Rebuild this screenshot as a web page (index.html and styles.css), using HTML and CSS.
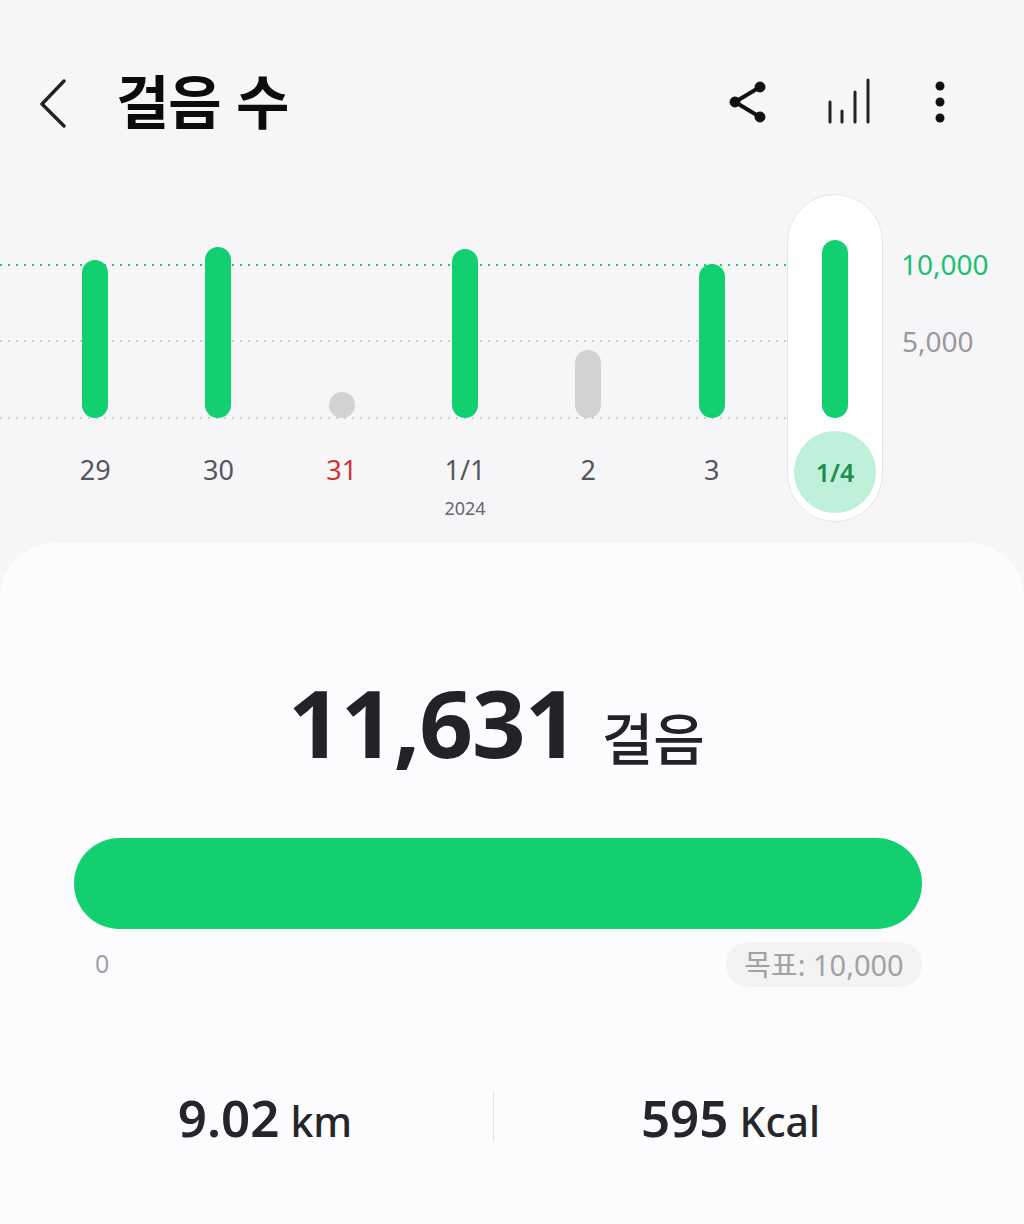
FILE: index.html
```html
<!DOCTYPE html>
<html lang="ko">
<head>
<meta charset="utf-8">
<title>걸음 수</title>
<link rel="stylesheet" href="styles.css">
</head>
<body>
<div class="app">
  <header class="topbar">
    <svg class="icon-back" width="30" height="50" viewBox="0 0 30 50"><path d="M26 3 4 26l22 22" fill="none" stroke="#222" stroke-width="3.4" stroke-linecap="round" stroke-linejoin="round"/></svg>
    <h1 class="title">걸음 수</h1>
    <div class="actions">
      <svg class="icon-share" width="40" height="44" viewBox="0 0 40 44"><g fill="#111" stroke="#111"><path d="M32 7 7 22l25 15" fill="none" stroke-width="4"/><circle cx="32" cy="7" r="5"/><circle cx="7" cy="22" r="5"/><circle cx="32" cy="37" r="5"/></g></svg>
      <svg class="icon-bars" width="44" height="46" viewBox="0 0 44 46"><g stroke="#222" stroke-width="3" stroke-linecap="round"><path d="M3 24v20"/><path d="M15 33v11"/><path d="M28 14v30"/><path d="M41 2v42"/></g></svg>
      <svg class="icon-more" width="10" height="42" viewBox="0 0 10 42"><g fill="#111"><circle cx="5" cy="5" r="4.5"/><circle cx="5" cy="21" r="4.5"/><circle cx="5" cy="37" r="4.5"/></g></svg>
    </div>
  </header>

  <section class="chart">
    <div class="gridline gridline-goal"></div>
    <div class="gridline gridline-mid"></div>
    <div class="gridline gridline-base"></div>
    <div class="columns">
      <div class="day"><div class="plot"><div class="bar" style="height:158px"></div></div><div class="day-label">29</div></div>
      <div class="day"><div class="plot"><div class="bar" style="height:171px"></div></div><div class="day-label">30</div></div>
      <div class="day"><div class="plot"><div class="bar bar-under" style="height:26px"></div></div><div class="day-label day-label-holiday">31</div></div>
      <div class="day"><div class="plot"><div class="bar" style="height:169px"></div></div><div class="day-label">1/1</div><div class="year-label">2024</div></div>
      <div class="day"><div class="plot"><div class="bar bar-under" style="height:68px"></div></div><div class="day-label">2</div></div>
      <div class="day"><div class="plot"><div class="bar" style="height:154px"></div></div><div class="day-label">3</div></div>
      <div class="day day-current">
        <div class="current-pill">
          <div class="plot"><div class="bar" style="height:178px"></div></div>
          <div class="current-date">1/4</div>
        </div>
      </div>
    </div>
    <div class="scale scale-goal">10,000</div>
    <div class="scale scale-mid">5,000</div>
  </section>

  <main class="sheet">
    <div class="total"><span class="total-value">11,631</span><span class="total-unit">걸음</span></div>
    <div class="progress"></div>
    <div class="progress-legend">
      <span class="legend-zero">0</span>
      <span class="legend-goal">목표: 10,000</span>
    </div>
    <div class="stats">
      <div class="stat"><span class="stat-value">9.02</span><span class="stat-unit">km</span></div>
      <div class="stat stat-divided"><span class="stat-value">595</span><span class="stat-unit">Kcal</span></div>
    </div>
  </main>
</div>
</body>
</html>
```
FILE: styles.css
```css
* { box-sizing: border-box; }

html, body { margin: 0; padding: 0; }

body {
  background: #f6f6f8;
  font-family: "Noto Sans", "Noto Sans CJK KR", sans-serif;
  color: #222;
}

.app {
  width: 1024px;
  height: 1224px;
  overflow: hidden;
  display: flex;
  flex-direction: column;
}

/* Top bar */
.topbar {
  height: 194px;
  padding: 78px 0 0 38px;
  display: flex;
  align-items: flex-start;
}

.icon-back { display: block; }

.title {
  margin: -21px 0 0 48px;
  font-family: "Noto Sans CJK KR", sans-serif;
  font-size: 58px;
  line-height: 84px;
  font-weight: 700;
  color: #0c0c0c;
  letter-spacing: -1px;
  white-space: nowrap;
}

.actions {
  margin-left: auto;
  margin-right: 79px;
  display: flex;
  align-items: flex-start;
}

.icon-share { display: block; margin-top: 2px; }
.icon-bars { display: block; margin: 0 0 0 59px; }
.icon-more { display: block; margin: 3px 0 0 64px; }

/* Chart */
.chart {
  position: relative;
  height: 328px;
  flex: none;
}

/* Dotted guide lines: a 2px dot every 8px */
.gridline {
  position: absolute;
  left: 0;
  width: 788px;
  height: 2px;
  background: repeating-linear-gradient(90deg, #cfcfd2 0 2px, transparent 2px 8px);
}

.gridline-goal {
  top: 70px;
  background: repeating-linear-gradient(90deg, #2cc47d 0 2px, transparent 2px 8px);
}
.gridline-mid { top: 146px; }
.gridline-base { top: 223px; }

.columns {
  position: relative;
  display: flex;
  padding-left: 33.5px;
}

.day {
  width: 123.3px;
  display: flex;
  flex-direction: column;
  align-items: center;
}

.plot {
  height: 224px;
  display: flex;
  align-items: flex-end;
  justify-content: center;
}

.bar {
  width: 26px;
  border-radius: 13px;
  background: #12d070;
}

.bar-under { background: #d2d2d3; }

.day-label {
  margin-top: 33px;
  font-size: 27px;
  line-height: 38px;
  color: #55565a;
}

.day-label-holiday { color: #cc3333; }

.year-label {
  margin-top: 6px;
  font-size: 18px;
  line-height: 26px;
  color: #66676b;
}

.current-pill {
  width: 96px;
  height: 328px;
  flex: none;
  background: #fff;
  border: 1px solid #e6e6e8;
  border-radius: 48px;
  display: flex;
  flex-direction: column;
  align-items: center;
}

.current-pill .plot { height: 223px; }

.current-date {
  margin-top: 13px;
  width: 82px;
  height: 82px;
  border-radius: 50%;
  background: #bff0da;
  color: #1b8f50;
  font-size: 25px;
  font-weight: 600;
  display: flex;
  align-items: center;
  justify-content: center;
}

.scale {
  position: absolute;
  left: 901px;
  font-size: 28px;
  line-height: 36px;
  white-space: nowrap;
}

.scale-goal { top: 52px; color: #1cbf72; }
.scale-mid { top: 129px; left: 902px; color: #98989c; }

/* Summary sheet */
.sheet {
  flex: 1;
  margin-top: 21px;
  padding: 127px 102px 0 74px;
  background: #fcfcfe;
  border-radius: 54px 54px 0 0;
  display: flex;
  flex-direction: column;
}

.total {
  height: 101px;
  padding-left: 214px;
  display: flex;
  align-items: baseline;
  white-space: nowrap;
  color: #222327;
}

.total-value {
  font-size: 94px;
  line-height: 104px;
  font-weight: 700;
  letter-spacing: -1px;
}

.total-unit {
  position: relative;
  top: 2px;
  margin-left: 24px;
  font-family: "Noto Sans CJK KR", sans-serif;
  font-size: 56px;
  font-weight: 500;
  line-height: 56px;
}

.progress {
  margin-top: 67px;
  height: 91px;
  border-radius: 46px;
  background: #12d070;
}

.progress-legend {
  margin-top: 13px;
  padding-left: 21px;
  display: flex;
  align-items: center;
  justify-content: space-between;
  color: #a2a2a6;
  font-size: 25px;
}

.legend-zero { padding-bottom: 4px; }

.legend-goal {
  width: 196px;
  height: 45px;
  padding-bottom: 4px;
  border-radius: 23px;
  background: #f3f3f4;
  display: flex;
  align-items: center;
  justify-content: center;
  white-space: nowrap;
  font-size: 29px;
}

.stats {
  margin: 105px -45px 0 -37px;
  display: grid;
  grid-template-columns: 456px 474px;
  height: 50px;
}

.stat {
  display: flex;
  align-items: baseline;
  justify-content: center;
  gap: 11px;
  height: 50px;
  white-space: nowrap;
  color: #25262a;
}

.stat-divided { border-left: 1px solid #e4e4e6; }

.stat-value {
  font-size: 51px;
  font-weight: 600;
  line-height: 50px;
}

.stat-unit {
  font-size: 41px;
  font-weight: 500;
  line-height: 50px;
}
```
